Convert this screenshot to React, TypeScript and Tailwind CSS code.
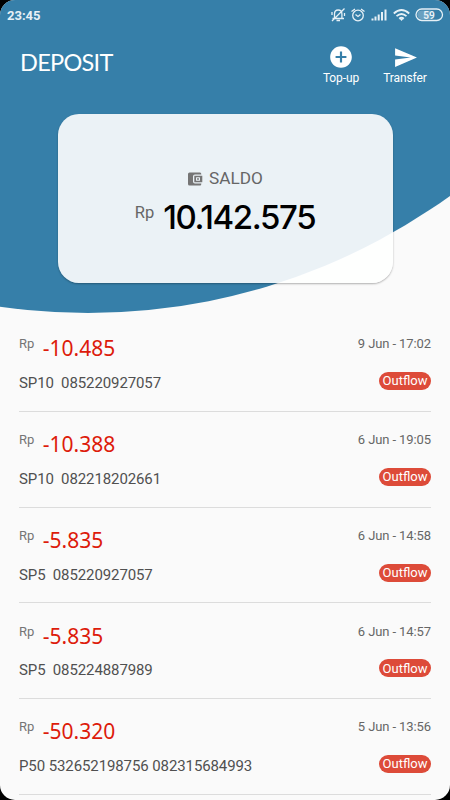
import { MdAddCircle, MdSend } from "react-icons/md";

const transactions = [
  { amount: "-10.485", code: "SP10  085220927057", date: "9 Jun - 17:02" },
  { amount: "-10.388", code: "SP10  082218202661", date: "6 Jun - 19:05" },
  { amount: "-5.835", code: "SP5  085220927057", date: "6 Jun - 14:58" },
  { amount: "-5.835", code: "SP5  085224887989", date: "6 Jun - 14:57" },
  { amount: "-50.320", code: "P50 532652198756 082315684993", date: "5 Jun - 13:56" },
];

export default function App() {
  return (
    <div className="h-[800px] w-[450px] overflow-hidden bg-black font-['Roboto',sans-serif]">
      <div className="relative isolate flex h-full flex-col overflow-hidden rounded-[15px] bg-[#fafafa]">
        {/* CURVED BACKDROP */}
        <svg className="absolute inset-0 -z-10" width="450" height="320">
          <circle cx="88" cy="-305" r="618" fill="#367fa9" />
        </svg>

        <StatusBar />

        {/* TITLE + ACTIONS */}
        <header className="flex h-[84px] items-start justify-between pr-[13px] pl-5 text-white">
          <h1 className="pt-[14px] font-['Lato',sans-serif] text-[23.5px] leading-[36px] tracking-[-0.7px]">
            DEPOSIT
          </h1>
          <div className="flex">
            <Action label="Top-up" icon={<MdAddCircle size={26} />} />
            <Action label="Transfer" icon={<MdSend size={25} />} />
          </div>
        </header>

        {/* BALANCE */}
        <section className="mr-[57.5px] ml-[57.5px] flex h-[169px] shrink-0 flex-col items-center rounded-[21px] bg-white/90 shadow-[0_1px_2px_rgba(0,0,0,0.3)]">
          <div className="mt-[54px] flex h-[22px] items-center gap-[6px] pl-px text-[17.2px] text-[#666]">
            <WalletIcon />
            <span>SALDO</span>
          </div>
          <div className="mt-[4px] flex items-start">
            <span className="pt-[7px] text-[16.5px] leading-[24px] text-[#666]">Rp</span>
            <span className="ml-[9px] font-['Inter',sans-serif] text-[33px] leading-[46px] font-medium tracking-[-1.4px] text-black">
              10.142.575
            </span>
          </div>
        </section>

        {/* TRANSACTIONS */}
        <ul className="mx-[19px] mt-[33px]">
          {transactions.map((t, i) => (
            <Transaction key={i} {...t} />
          ))}
        </ul>
      </div>
    </div>
  );
}

function Action({ label, icon }: any) {
  return (
    <button className="flex w-16 flex-col items-center pt-[14px] text-[12px] leading-[16px] tracking-[-0.1px]">
      <span className="flex h-[26px] items-center">{icon}</span>
      {label}
    </button>
  );
}

function Transaction({ amount, code, date }: any) {
  return (
    <li className="flex h-[95.8px] justify-between border-b border-[#dcdcdc] pt-[20.2px]">
      <div>
        <div className="flex items-start">
          <span className="text-[13px] leading-[16px] text-[#757575]">Rp</span>
          <span className="ml-[8.5px] font-['Noto_Sans',sans-serif] text-[21px] leading-[24px] text-[#dd1b0b]">
            {amount}
          </span>
        </div>
        <p className="mt-[13.8px] text-[15px] leading-[18px] tracking-[-0.1px] whitespace-pre text-[#505050]">
          {code}
        </p>
      </div>
      <div className="flex flex-col items-end">
        <span className="text-[13px] leading-[16px] tracking-[-0.1px] text-[#666]">{date}</span>
        <span className="mt-[19.8px] flex h-[18px] w-[52px] items-center justify-center rounded-full bg-[#dd4b39] text-[13px] text-white">
          Outflow
        </span>
      </div>
    </li>
  );
}

function WalletIcon() {
  return (
    <svg width="15" height="14" viewBox="0 0 15 14">
      <path
        d="M1.5 0.5H12Q13.3 0.5 13.3 2v0.5H7Q5 2.5 5 4.5v5Q5 11.5 7 11.5h6.3v0.5Q13.3 13.5 12 13.5H1.5Q0 13.5 0 12V2Q0 0.5 1.5 0.5z"
        fill="#757575"
      />
      <path d="M6.3 3.8H14.3v6.4H6.3z" fill="#757575" />
      <rect x="8" y="5.3" width="4" height="3.4" rx="0.5" fill="#eaf1f6" />
      <circle cx="10" cy="7" r="0.9" fill="#757575" />
    </svg>
  );
}

function StatusBar() {
  return (
    <div className="flex h-[30px] shrink-0 items-center justify-between pr-[5px] pl-[7px] text-[#e6f0f6]">
      <span className="pt-px text-[13px] font-bold">23:45</span>
      <svg width="114" height="18" viewBox="331 6 114 18" fill="none" stroke="currentColor" strokeWidth="1.3">
        {/* muted bell */}
        <path d="M332.5 18.5h11.5M334.500 18v-4q0-4 3.700-4t3.700 4v4M336.500 20.500h3.500M332 21l12.500-12.500M332 12v3M344.500 13v3" />
        {/* alarm */}
        <circle cx="358" cy="15.5" r="5.3" />
        <path d="M355.5 14.5l2.500 2 2.500-2M351.500 11.500l3.500-2.500M364.500 11.500l-3.500-2.500" />
        {/* signal */}
        <path d="M372.5 20.5v-2M375.500 20.500v-4M378.700 20.500v-6M382 20.500v-8.500M385.500 20.500V9.500" strokeWidth="2" />
        {/* wifi */}
        <path d="M393.8 13.5q7.700-7 15.400 0M396.500 16.200q5-4.500 10 0M399.200 18.700q2.300-2 4.600 0" strokeWidth="1.8" />
        <path d="M399.700 18.800h3.600l-1.800 2.200z" fill="currentColor" stroke="none" />
        {/* battery */}
        <rect x="416" y="9" width="26.5" height="11.5" rx="5.75" />
        <path d="M421.5 10.500h9v8.500h-9a4.250 4.250 0 010-8.500z" fill="currentColor" fillOpacity="0.3" stroke="none" />
        <text x="429" y="18.500" fill="currentColor" stroke="none" fontSize="10" fontWeight="bold" textAnchor="middle">
          59
        </text>
      </svg>
    </div>
  );
}
